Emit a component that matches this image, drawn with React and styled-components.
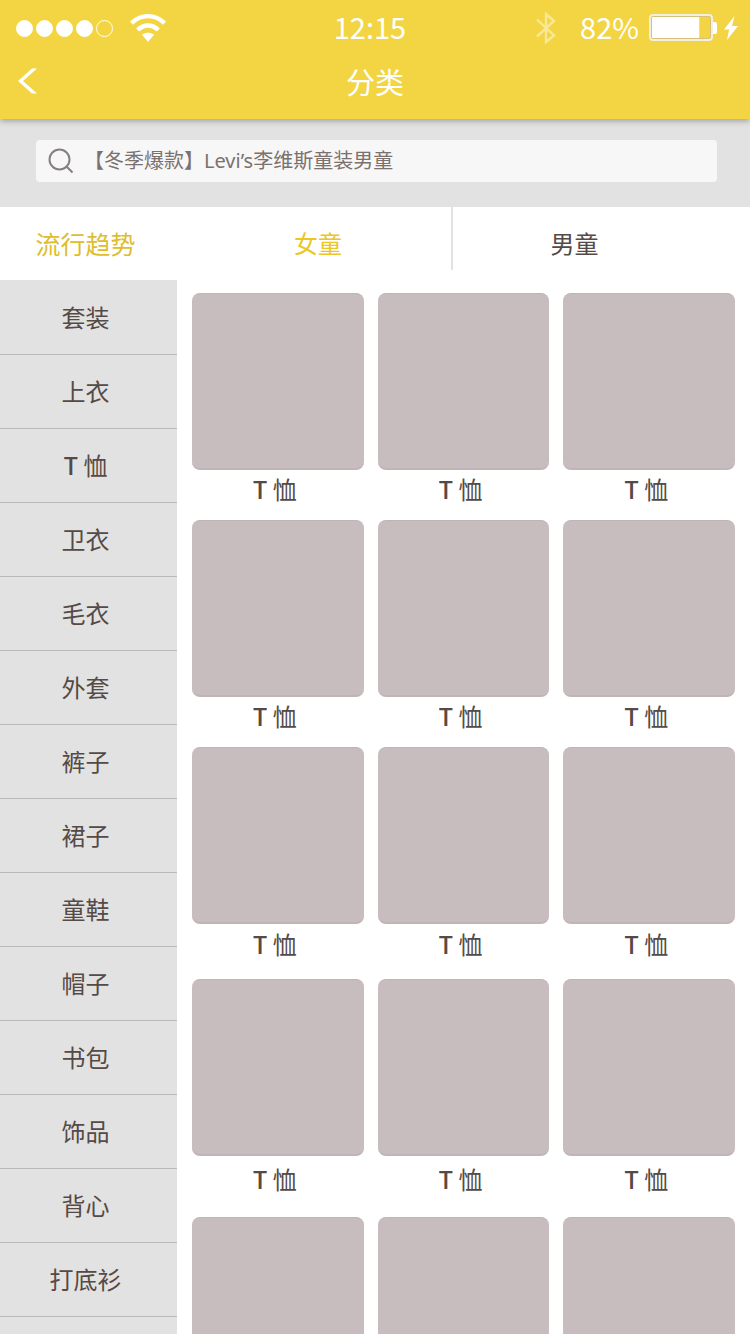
import React from "react";
import styled, { createGlobalStyle } from "styled-components";

const color = {
  brand: "#f3d543",
  panel: "#e2e2e2",
  line: "#bcb8b9",
  tile: "#c7bdbe",
  tileEdge: "#bfb4b6",
  text: "#554a46",
  muted: "#7b716e",
};

const GlobalStyle = createGlobalStyle`
  * { box-sizing: border-box; }
  body {
    margin: 0;
    background: #fff;
    color: ${color.text};
    font-family: "Noto Sans CJK SC", "Noto Sans", sans-serif;
    font-size: 24px;
  }
  a { color: inherit; text-decoration: none; }
  button, input { font: inherit; color: inherit; border: 0; background: none; padding: 0; }
`;

const Screen = styled.div`
  display: flex;
  flex-direction: column;
  height: 100vh;
  overflow: hidden;
`;

const Header = styled.header`
  position: relative;
  z-index: 1;
  background: ${color.brand};
  color: #fff;
  box-shadow: 0 2px 6px rgba(0, 0, 0, 0.3);
`;

const StatusBar = styled.div`
  display: grid;
  grid-template-columns: 1fr auto 1fr;
  align-items: center;
  height: 55px;
  padding: 0 12px 0 16px;
  font-size: 29px;
  line-height: 52px;
`;

const StatusGroup = styled.div`
  display: flex;
  align-items: center;
  justify-content: ${(p) => (p.$end ? "flex-end" : "flex-start")};
  gap: ${(p) => p.$gap}px;
`;

const Time = styled.time`
  padding: 0 14px 4px 0;
`;

const Dot = styled.span`
  width: 17px;
  height: 17px;
  border: 1px solid #fff;
  border-radius: 50%;
  background: ${(p) => (p.$on ? "#fff" : "transparent")};
`;

const Percent = styled.span`
  padding: 0 0 4px 14px;
`;

const TitleBar = styled.div`
  display: grid;
  grid-template-columns: 1fr auto 1fr;
  align-items: center;
  height: 64px;
  padding: 0 16px 12px;
`;

const BackButton = styled.button`
  display: flex;
  justify-self: start;
  cursor: pointer;
`;

const Title = styled.h1`
  margin: 0;
  font-size: 29px;
  font-weight: 400;
  line-height: 52px;
`;

const SearchArea = styled.form`
  padding: 21px 33px 25px 36px;
  background: ${color.panel};
`;

const SearchBox = styled.label`
  display: flex;
  align-items: center;
  gap: 10px;
  height: 42px;
  padding: 0 12px;
  border-radius: 4px;
  background: #f7f7f7;
  color: ${color.muted};
`;

const SearchInput = styled.input`
  flex: 1;
  min-width: 0;
  height: 42px;
  padding-bottom: 2px;
  font-family: "Noto Sans", "Noto Sans CJK SC", sans-serif;
  font-size: 20px;
  outline: none;
  &::placeholder { color: ${color.muted}; opacity: 1; }
`;

const Tabs = styled.nav`
  display: grid;
  grid-template-columns: 177px 276fr 243fr 54fr;
  height: 73px;
  padding-bottom: 10px;
`;

const Tab = styled.a`
  display: flex;
  align-items: center;
  justify-content: center;
  padding-top: 8px;
  color: ${(p) => p.$color};
  font-size: ${(p) => (p.$lead ? "25px" : "24px")};
  border-right: ${(p) => (p.$divided ? "2px solid #e2e2e2" : "0")};
  padding-left: ${(p) => (p.$divided ? "8px" : "0")};
  padding-right: ${(p) => (p.$lead ? "6px" : "0")};
`;

const Body = styled.div`
  display: flex;
  flex: 1;
  min-height: 0;
`;

const Sidebar = styled.nav`
  flex: none;
  width: 177px;
  padding-top: 1px;
  background: ${color.panel};
  overflow-y: auto;
  scrollbar-width: none;
`;

const SidebarLink = styled.a`
  display: flex;
  align-items: center;
  justify-content: center;
  height: 74px;
  padding: 0 6px 3px 0;
  border-bottom: 1px solid ${color.line};
`;

const Catalog = styled.main`
  flex: 1;
  min-width: 0;
  padding: 13px 15px 0;
  overflow-y: auto;
  scrollbar-width: none;
`;

const ProductRow = styled.section`
  display: grid;
  grid-template-columns: repeat(3, 1fr);
  column-gap: 14px;
  margin-bottom: ${(p) => p.$gap}px;
  line-height: ${(p) => p.$caption}px;
`;

const Product = styled.a`
  display: block;
  text-align: center;
`;

const Thumb = styled.span`
  display: block;
  height: 177px;
  border: 1px solid ${color.tileEdge};
  border-width: 1px 0 2px;
  border-radius: 8px;
  background: ${color.tile};
`;

const Caption = styled.span`
  display: block;
  padding-right: 6px;
`;

const Latin = styled.span`
  font-weight: 500;
`;

const Label = ({ text }) =>
  text.startsWith("T") ? (
    <span>
      <Latin>T</Latin>
      {text.slice(1)}
    </span>
  ) : (
    text
  );

const WifiIcon = () => (
  <svg width="36" height="28" viewBox="0 0 36 28" aria-label="Wi-Fi">
    <g fill="none" stroke="#fff" strokeWidth="4.4">
      <path d="M1.5 9.2C11 -0.2 25 -0.2 34.5 9.2" />
      <path d="M7.7 16C14 10 22 10 28.3 16" />
    </g>
    <path d="M12 20.8C15.8 18.2 20.2 18.2 24 20.8L18 28Z" fill="#fff" />
  </svg>
);

const BluetoothIcon = () => (
  <svg width="20" height="32" viewBox="0 0 20 32" aria-label="蓝牙">
    <path
      d="M1 7.5L18 23.5L10 30V2L18 9L1 24.5"
      fill="none"
      stroke="#fff"
      strokeOpacity="0.45"
      strokeWidth="2.4"
    />
  </svg>
);

const BatteryIcon = () => (
  <svg width="68" height="28" viewBox="0 0 68 28" aria-label="电池">
    <rect x="1" y="1" width="62" height="25" rx="3" fill="none" stroke="#f4efdf" strokeWidth="2" />
    <rect x="2.5" y="2.5" width="59" height="22" rx="2" fill="none" stroke="#d5c07c" />
    <rect x="3" y="3" width="47" height="21" rx="1" fill="#fff" />
    <path d="M50.5 3V24" stroke="#e9dca6" />
    <path d="M64 8h2q2 0 2 2v8q0 2-2 2h-2z" fill="#fff" />
  </svg>
);

const BoltIcon = () => (
  <svg width="14" height="24" viewBox="0 0 14 24" aria-label="充电中">
    <path d="M10.5 0L0 13.5H5.2L3 24L14 10H8Z" fill="#fff" />
  </svg>
);

const BackIcon = () => (
  <svg width="22" height="26" viewBox="0 0 22 26" aria-hidden="true">
    <path d="M16 0.5H21L7 13L21 25.5H16L2 13Z" fill="#fff" />
  </svg>
);

const SearchIcon = () => (
  <svg width="26" height="26" viewBox="0 0 26 26" fill="none" stroke="#85807f" strokeWidth="2" aria-hidden="true">
    <circle cx="11.5" cy="11.5" r="10" />
    <path d="M18.5 18.5L24.5 24.5" />
  </svg>
);

const categories = [
  "套装", "上衣", "T 恤", "卫衣", "毛衣", "外套", "裤子", "裙子",
  "童鞋", "帽子", "书包", "饰品", "背心", "打底衫", "",
];

const rows = [
  { caption: 38, gap: 12, name: "T 恤" },
  { caption: 38, gap: 12, name: "T 恤" },
  { caption: 40, gap: 15, name: "T 恤" },
  { caption: 46, gap: 15, name: "T 恤" },
  { caption: 46, gap: 15, name: "" },
];

export default function App() {
  return (
    <Screen>
      <GlobalStyle />
      <Header>
        <StatusBar>
          <StatusGroup $gap={17}>
            <StatusGroup $gap={3}>
              {[true, true, true, true, false].map((on, i) => (
                <Dot key={i} $on={on} />
              ))}
            </StatusGroup>
            <WifiIcon />
          </StatusGroup>
          <Time>12:15</Time>
          <StatusGroup $end $gap={10}>
            <BluetoothIcon />
            <Percent>82%</Percent>
            <StatusGroup $gap={7}>
              <BatteryIcon />
              <BoltIcon />
            </StatusGroup>
          </StatusGroup>
        </StatusBar>
        <TitleBar>
          <BackButton type="button" aria-label="返回">
            <BackIcon />
          </BackButton>
          <Title>分类</Title>
        </TitleBar>
      </Header>

      <SearchArea role="search">
        <SearchBox>
          <SearchIcon />
          <SearchInput type="text" aria-label="搜索" placeholder="【冬季爆款】Levi’s李维斯童装男童" />
        </SearchBox>
      </SearchArea>

      <Tabs>
        <Tab href="#trend" $color="#e0bd2c" $lead>流行趋势</Tab>
        <Tab href="#girls" $color="#ecc623" $divided>女童</Tab>
        <Tab href="#boys" $color={color.text}>男童</Tab>
      </Tabs>

      <Body>
        <Sidebar>
          {categories.map((name, i) => (
            <SidebarLink key={i} href={`#category-${i}`}>
              <Label text={name} />
            </SidebarLink>
          ))}
        </Sidebar>
        <Catalog>
          {rows.map((row, r) => (
            <ProductRow key={r} $caption={row.caption} $gap={row.gap}>
              {[0, 1, 2].map((c) => (
                <Product key={c} href={`#product-${r}-${c}`}>
                  <Thumb />
                  {row.name && (
                    <Caption>
                      <Label text={row.name} />
                    </Caption>
                  )}
                </Product>
              ))}
            </ProductRow>
          ))}
        </Catalog>
      </Body>
    </Screen>
  );
}
